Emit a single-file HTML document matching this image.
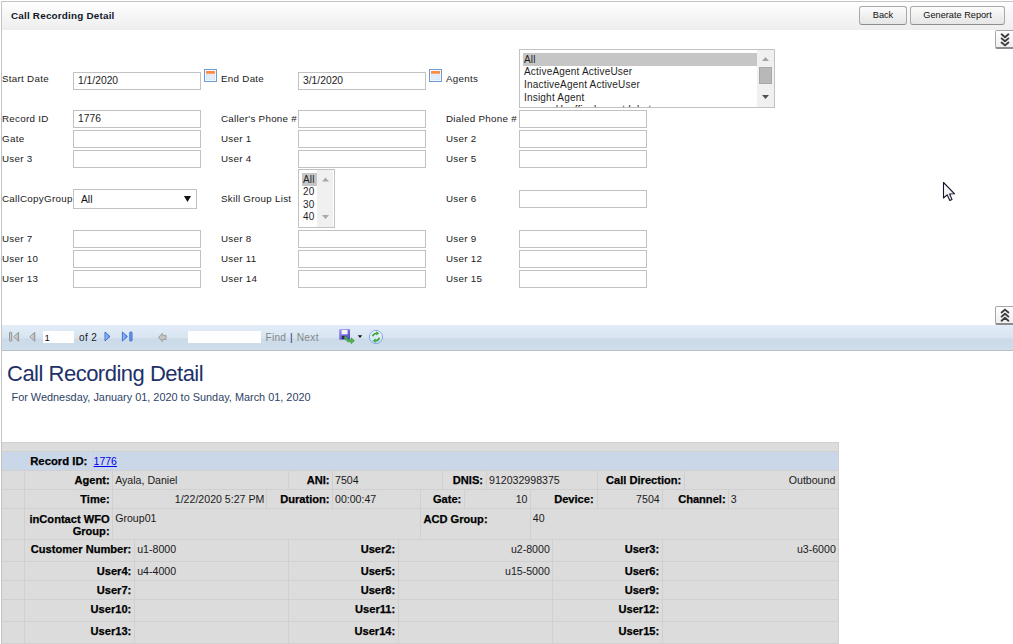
<!DOCTYPE html>
<html><head><meta charset="utf-8"><title>Call Recording Detail</title>
<style>
html,body{margin:0;padding:0;background:#fff;width:1013px;height:644px;overflow:hidden;position:relative;font-family:"Liberation Sans",sans-serif;}
.r{position:absolute;}
.t{position:absolute;white-space:nowrap;}
</style></head><body>
<div class="r" style="left:1px;top:1px;width:1012px;height:643px;border-left:1px solid #c4c4c4;border-top:1px solid #c4c4c4;box-sizing:border-box;"></div>
<div class="r" style="left:2px;top:2px;width:1011px;height:28px;background:linear-gradient(#ffffff,#f7f7f7 40%,#eeeeee);"></div>
<div class="t" style="left:11px;top:10.92px;font-size:9.9px;line-height:9.9px;font-weight:bold;color:#101828;letter-spacing:0.2px;">Call Recording Detail</div>
<div class="r" style="left:859px;top:6px;width:48px;height:19px;box-sizing:border-box;border:1px solid #a9a9a9;border-bottom-color:#8f8f8f;border-radius:3px;background:linear-gradient(#fcfcfc,#f0f0f0 50%,#e6e6e6);"></div>
<div class="t" style="left:683.0px;width:400px;text-align:center;top:10.51px;font-size:9.2px;line-height:9.2px;font-weight:normal;color:#111;">Back</div>
<div class="r" style="left:910px;top:6px;width:95px;height:19px;box-sizing:border-box;border:1px solid #a9a9a9;border-bottom-color:#8f8f8f;border-radius:3px;background:linear-gradient(#fcfcfc,#f0f0f0 50%,#e6e6e6);"></div>
<div class="t" style="left:757.5px;width:400px;text-align:center;top:10.51px;font-size:9.2px;line-height:9.2px;font-weight:normal;color:#111;">Generate Report</div>
<div class="r" style="left:995px;top:30px;width:22px;height:19px;box-sizing:border-box;border:1px solid #a6a6a6;border-bottom:2px solid #8c8c8c;border-radius:2px;background:linear-gradient(#ffffff,#efefef);"></div>
<svg class="r" style="left:1000px;top:30px" width="10" height="19" viewBox="0 0 10 19"><g fill="none" stroke="#3c3c3c" stroke-width="1.9" stroke-linecap="round" stroke-linejoin="round"><polyline points="1.6,4.30 5,7.20 8.4,4.30" /><polyline points="1.6,8.40 5,11.30 8.4,8.40" /><polyline points="1.6,12.50 5,15.40 8.4,12.50" /></g></svg>
<div class="r" style="left:995px;top:306px;width:22px;height:19px;box-sizing:border-box;border:1px solid #a6a6a6;border-bottom:2px solid #8c8c8c;border-radius:2px;background:linear-gradient(#ffffff,#efefef);"></div>
<svg class="r" style="left:1000px;top:306px" width="10" height="19" viewBox="0 0 10 19"><g fill="none" stroke="#3c3c3c" stroke-width="1.9" stroke-linecap="round" stroke-linejoin="round"><polyline points="1.6,6.50 5,3.60 8.4,6.50" /><polyline points="1.6,10.60 5,7.70 8.4,10.60" /><polyline points="1.6,14.70 5,11.80 8.4,14.70" /></g></svg>
<div class="t" style="left:2px;top:73.50px;font-size:9.8px;line-height:9.8px;font-weight:normal;color:#1a1a1a;letter-spacing:0.28px;">Start Date</div>
<div class="r" style="left:73px;top:72px;width:128px;height:18px;box-sizing:border-box;border:1px solid #c2c2c2;background:#fff;"></div>
<div class="t" style="left:78px;top:75.88px;font-size:10.3px;line-height:10.3px;font-weight:normal;color:#1b1b1b;">1/1/2020</div>
<svg class="r" style="left:204px;top:69px" width="13" height="13" viewBox="0 0 13 13"><rect x="0.5" y="0.5" width="12" height="12" fill="#f4f8fd" stroke="#6f9ad6"/><rect x="2" y="2" width="9" height="2.8" rx="0.6" fill="#ff8a3a"/><rect x="2" y="5.2" width="9" height="5.8" fill="#d6e5f8"/><g stroke="#eef4fc" stroke-width="0.6"><line x1="2" y1="7.2" x2="11" y2="7.2"/><line x1="2" y1="9.2" x2="11" y2="9.2"/><line x1="4.3" y1="5.2" x2="4.3" y2="11"/><line x1="6.5" y1="5.2" x2="6.5" y2="11"/><line x1="8.7" y1="5.2" x2="8.7" y2="11"/></g></svg>
<div class="t" style="left:221px;top:73.60px;font-size:9.8px;line-height:9.8px;font-weight:normal;color:#1a1a1a;letter-spacing:0.28px;">End Date</div>
<div class="r" style="left:298px;top:72px;width:128px;height:18px;box-sizing:border-box;border:1px solid #c2c2c2;background:#fff;"></div>
<div class="t" style="left:303px;top:75.88px;font-size:10.3px;line-height:10.3px;font-weight:normal;color:#1b1b1b;">3/1/2020</div>
<svg class="r" style="left:429px;top:69px" width="13" height="13" viewBox="0 0 13 13"><rect x="0.5" y="0.5" width="12" height="12" fill="#f4f8fd" stroke="#6f9ad6"/><rect x="2" y="2" width="9" height="2.8" rx="0.6" fill="#ff8a3a"/><rect x="2" y="5.2" width="9" height="5.8" fill="#d6e5f8"/><g stroke="#eef4fc" stroke-width="0.6"><line x1="2" y1="7.2" x2="11" y2="7.2"/><line x1="2" y1="9.2" x2="11" y2="9.2"/><line x1="4.3" y1="5.2" x2="4.3" y2="11"/><line x1="6.5" y1="5.2" x2="6.5" y2="11"/><line x1="8.7" y1="5.2" x2="8.7" y2="11"/></g></svg>
<div class="t" style="left:446px;top:74.10px;font-size:9.8px;line-height:9.8px;font-weight:normal;color:#1a1a1a;letter-spacing:0.28px;">Agents</div>
<div class="r" style="left:73px;top:110px;width:128px;height:18px;box-sizing:border-box;border:1px solid #c2c2c2;background:#fff;"></div>
<div class="t" style="left:78px;top:113.88px;font-size:10.3px;line-height:10.3px;font-weight:normal;color:#1b1b1b;">1776</div>
<div class="t" style="left:2px;top:113.50px;font-size:9.8px;line-height:9.8px;font-weight:normal;color:#1a1a1a;letter-spacing:0.28px;">Record ID</div>
<div class="r" style="left:298px;top:110px;width:128px;height:18px;box-sizing:border-box;border:1px solid #c2c2c2;background:#fff;"></div>
<div class="t" style="left:221px;top:113.50px;font-size:9.8px;line-height:9.8px;font-weight:normal;color:#1a1a1a;letter-spacing:0.28px;">Caller's Phone #</div>
<div class="r" style="left:519px;top:110px;width:128px;height:18px;box-sizing:border-box;border:1px solid #c2c2c2;background:#fff;"></div>
<div class="t" style="left:446px;top:113.50px;font-size:9.8px;line-height:9.8px;font-weight:normal;color:#1a1a1a;letter-spacing:0.28px;">Dialed Phone #</div>
<div class="r" style="left:73px;top:130px;width:128px;height:18px;box-sizing:border-box;border:1px solid #c2c2c2;background:#fff;"></div>
<div class="t" style="left:2px;top:133.50px;font-size:9.8px;line-height:9.8px;font-weight:normal;color:#1a1a1a;letter-spacing:0.28px;">Gate</div>
<div class="r" style="left:298px;top:130px;width:128px;height:18px;box-sizing:border-box;border:1px solid #c2c2c2;background:#fff;"></div>
<div class="t" style="left:221px;top:133.50px;font-size:9.8px;line-height:9.8px;font-weight:normal;color:#1a1a1a;letter-spacing:0.28px;">User 1</div>
<div class="r" style="left:519px;top:130px;width:128px;height:18px;box-sizing:border-box;border:1px solid #c2c2c2;background:#fff;"></div>
<div class="t" style="left:446px;top:133.50px;font-size:9.8px;line-height:9.8px;font-weight:normal;color:#1a1a1a;letter-spacing:0.28px;">User 2</div>
<div class="r" style="left:73px;top:150px;width:128px;height:18px;box-sizing:border-box;border:1px solid #c2c2c2;background:#fff;"></div>
<div class="t" style="left:2px;top:153.50px;font-size:9.8px;line-height:9.8px;font-weight:normal;color:#1a1a1a;letter-spacing:0.28px;">User 3</div>
<div class="r" style="left:298px;top:150px;width:128px;height:18px;box-sizing:border-box;border:1px solid #c2c2c2;background:#fff;"></div>
<div class="t" style="left:221px;top:153.50px;font-size:9.8px;line-height:9.8px;font-weight:normal;color:#1a1a1a;letter-spacing:0.28px;">User 4</div>
<div class="r" style="left:519px;top:150px;width:128px;height:18px;box-sizing:border-box;border:1px solid #c2c2c2;background:#fff;"></div>
<div class="t" style="left:446px;top:153.50px;font-size:9.8px;line-height:9.8px;font-weight:normal;color:#1a1a1a;letter-spacing:0.28px;">User 5</div>
<div class="r" style="left:73px;top:230px;width:128px;height:18px;box-sizing:border-box;border:1px solid #c2c2c2;background:#fff;"></div>
<div class="t" style="left:2px;top:233.50px;font-size:9.8px;line-height:9.8px;font-weight:normal;color:#1a1a1a;letter-spacing:0.28px;">User 7</div>
<div class="r" style="left:298px;top:230px;width:128px;height:18px;box-sizing:border-box;border:1px solid #c2c2c2;background:#fff;"></div>
<div class="t" style="left:221px;top:233.50px;font-size:9.8px;line-height:9.8px;font-weight:normal;color:#1a1a1a;letter-spacing:0.28px;">User 8</div>
<div class="r" style="left:519px;top:230px;width:128px;height:18px;box-sizing:border-box;border:1px solid #c2c2c2;background:#fff;"></div>
<div class="t" style="left:446px;top:233.50px;font-size:9.8px;line-height:9.8px;font-weight:normal;color:#1a1a1a;letter-spacing:0.28px;">User 9</div>
<div class="r" style="left:73px;top:250px;width:128px;height:18px;box-sizing:border-box;border:1px solid #c2c2c2;background:#fff;"></div>
<div class="t" style="left:2px;top:253.50px;font-size:9.8px;line-height:9.8px;font-weight:normal;color:#1a1a1a;letter-spacing:0.28px;">User 10</div>
<div class="r" style="left:298px;top:250px;width:128px;height:18px;box-sizing:border-box;border:1px solid #c2c2c2;background:#fff;"></div>
<div class="t" style="left:221px;top:253.50px;font-size:9.8px;line-height:9.8px;font-weight:normal;color:#1a1a1a;letter-spacing:0.28px;">User 11</div>
<div class="r" style="left:519px;top:250px;width:128px;height:18px;box-sizing:border-box;border:1px solid #c2c2c2;background:#fff;"></div>
<div class="t" style="left:446px;top:253.50px;font-size:9.8px;line-height:9.8px;font-weight:normal;color:#1a1a1a;letter-spacing:0.28px;">User 12</div>
<div class="r" style="left:73px;top:270px;width:128px;height:18px;box-sizing:border-box;border:1px solid #c2c2c2;background:#fff;"></div>
<div class="t" style="left:2px;top:273.50px;font-size:9.8px;line-height:9.8px;font-weight:normal;color:#1a1a1a;letter-spacing:0.28px;">User 13</div>
<div class="r" style="left:298px;top:270px;width:128px;height:18px;box-sizing:border-box;border:1px solid #c2c2c2;background:#fff;"></div>
<div class="t" style="left:221px;top:273.50px;font-size:9.8px;line-height:9.8px;font-weight:normal;color:#1a1a1a;letter-spacing:0.28px;">User 14</div>
<div class="r" style="left:519px;top:270px;width:128px;height:18px;box-sizing:border-box;border:1px solid #c2c2c2;background:#fff;"></div>
<div class="t" style="left:446px;top:273.50px;font-size:9.8px;line-height:9.8px;font-weight:normal;color:#1a1a1a;letter-spacing:0.28px;">User 15</div>
<div class="t" style="left:2px;top:194.00px;font-size:9.8px;line-height:9.8px;font-weight:normal;color:#1a1a1a;letter-spacing:0.28px;">CallCopyGroup</div>
<div class="r" style="left:73px;top:189px;width:124px;height:20px;box-sizing:border-box;border:1px solid #c2c2c2;background:#fff;"></div>
<div class="t" style="left:81px;top:194.58px;font-size:10.3px;line-height:10.3px;font-weight:normal;color:#111;">All</div>
<svg class="r" style="left:184px;top:196px" width="7" height="6" viewBox="0 0 7 6"><polygon points="0,0 7,0 3.5,6" fill="#111"/></svg>
<div class="t" style="left:221px;top:194.00px;font-size:9.8px;line-height:9.8px;font-weight:normal;color:#1a1a1a;letter-spacing:0.28px;">Skill Group List</div>
<div class="r" style="left:519px;top:190px;width:128px;height:18px;box-sizing:border-box;border:1px solid #c2c2c2;background:#fff;"></div>
<div class="t" style="left:446px;top:193.70px;font-size:9.8px;line-height:9.8px;font-weight:normal;color:#1a1a1a;letter-spacing:0.28px;">User 6</div>
<div class="r" style="left:298px;top:169px;width:37px;height:59px;box-sizing:border-box;border:1px solid #c2c2c2;background:#fff;"></div>
<div class="r" style="left:317px;top:170px;width:16px;height:57px;background:#f0f0f0;"></div>
<div class="r" style="left:302px;top:173px;width:15px;height:12.5px;background:#c6c6c6;"></div>
<div class="t" style="left:303px;top:174.54px;font-size:10px;line-height:10px;font-weight:normal;color:#1e1e1e;letter-spacing:0.2px;">All</div>
<div class="t" style="left:303px;top:187.04px;font-size:10px;line-height:10px;font-weight:normal;color:#1e1e1e;letter-spacing:0.2px;">20</div>
<div class="t" style="left:303px;top:199.54px;font-size:10px;line-height:10px;font-weight:normal;color:#1e1e1e;letter-spacing:0.2px;">30</div>
<div class="t" style="left:303px;top:212.04px;font-size:10px;line-height:10px;font-weight:normal;color:#1e1e1e;letter-spacing:0.2px;">40</div>
<svg class="r" style="left:321px;top:176px" width="9" height="44" viewBox="0 0 9 44"><polygon points="1,5.5 4.5,1.5 8,5.5" fill="#a8a8a8"/><polygon points="1,39 8,39 4.5,43" fill="#a8a8a8"/></svg>
<div class="r" style="left:519px;top:49px;width:256px;height:59px;box-sizing:border-box;border:1px solid #c2c2c2;background:#fff;overflow:hidden;"></div>
<div class="r" style="left:757px;top:50px;width:17px;height:57px;background:#f0f0f0;"></div>
<div class="r" style="left:759px;top:67px;width:13px;height:17px;background:#b8b8b8;box-sizing:border-box;border:1px solid #a8a8a8;"></div>
<div class="r" style="left:523px;top:53px;width:234px;height:12.5px;background:#c6c6c6;"></div>
<svg class="r" style="left:761px;top:55px" width="9" height="46" viewBox="0 0 9 46"><polygon points="1,6 4.5,2 8,6" fill="#a3a3a3"/><polygon points="1,40 8,40 4.5,44" fill="#505050"/></svg>
<div class="r" style="left:520px;top:50px;width:237px;height:57px;overflow:hidden;">
<div class="t" style="left:4px;top:4.83px;font-size:10px;line-height:10px;letter-spacing:0.2px;color:#1e1e1e">All</div>
<div class="t" style="left:4px;top:17.43px;font-size:10px;line-height:10px;letter-spacing:0.2px;color:#1e1e1e">ActiveAgent ActiveUser</div>
<div class="t" style="left:4px;top:30.04px;font-size:10px;line-height:10px;letter-spacing:0.2px;color:#1e1e1e">InactiveAgent ActiveUser</div>
<div class="t" style="left:4px;top:42.63px;font-size:10px;line-height:10px;letter-spacing:0.2px;color:#1e1e1e">Insight Agent</div>
<div class="t" style="left:4px;top:55.23px;font-size:10px;line-height:10px;letter-spacing:0.2px;color:#1e1e1e">aaaaa Unoffical agent Inbat</div>
</div>
<div class="r" style="left:2px;top:325px;width:1011px;height:25px;background:linear-gradient(#e2edf8 0%,#d8e5f1 50%,#cbdae8 57%,#cfdeeb 100%);"></div>
<div class="r" style="left:2px;top:350px;width:1011px;height:1px;background:#b9bfc6;"></div>
<svg class="r" style="left:0px;top:325px" width="400" height="25" viewBox="0 0 400 25"><defs><linearGradient id="gg" x1="0" x2="1" y1="0" y2="0"><stop offset="0" stop-color="#e4e4e4"/><stop offset="1" stop-color="#b4b4b4"/></linearGradient><linearGradient id="bg" x1="0" x2="1" y1="0" y2="0"><stop offset="0" stop-color="#a9c6f5"/><stop offset="1" stop-color="#4f82e0"/></linearGradient><linearGradient id="fl" x1="0" x2="1" y1="0" y2="1"><stop offset="0" stop-color="#9d96f0"/><stop offset="1" stop-color="#4a44c0"/></linearGradient><linearGradient id="rf" x1="0" x2="0" y1="0" y2="1"><stop offset="0" stop-color="#f6f9fe"/><stop offset="1" stop-color="#c7dbf6"/></linearGradient></defs><rect x="9.5" y="7.3" width="2.2" height="8.9" rx="0.6" fill="#c9c9c9" stroke="#8e8e8e" stroke-width="0.9"/><polygon points="18.6,7.3 18.6,16.2 13.6,11.75" fill="url(#gg)" stroke="#8e8e8e" stroke-width="0.9" stroke-linejoin="round"/><polygon points="34.8,7.3 34.8,16.2 29.8,11.75" fill="url(#gg)" stroke="#8e8e8e" stroke-width="0.9" stroke-linejoin="round"/><polygon points="105,7 105,16 110,11.5" fill="url(#bg)" stroke="#2f62d2" stroke-width="0.9" stroke-linejoin="round"/><polygon points="122.4,7 122.4,16 127.4,11.5" fill="url(#bg)" stroke="#2f62d2" stroke-width="0.9" stroke-linejoin="round"/><rect x="129.8" y="7" width="2.2" height="9" rx="0.6" fill="#7aa2ec" stroke="#2f62d2" stroke-width="0.9"/><polygon points="158.5,12.4 162.3,8.3 162.3,10.3 166,10.3 166,14.5 162.3,14.5 162.3,16.6" fill="#c4c4c4" stroke="#9a9a9a" stroke-width="0.9" stroke-linejoin="round"/><rect x="339.2" y="4.2" width="10.8" height="10.6" rx="0.8" fill="url(#fl)"/><rect x="341.6" y="5" width="6" height="4.3" fill="#f4f4fb"/><rect x="341.8" y="10.8" width="3" height="3.2" fill="#28285a"/><path d="M345,11 L348.5,14.8 L351.2,14.8 L351.2,12.8 L354.4,15.8 L351.2,18.6 L351.2,16.8 L347.6,16.8 L344,13 Z" fill="#4cb84c" stroke="#2f8f2f" stroke-width="0.6" stroke-linejoin="round"/><polygon points="357.8,10.2 362.2,10.2 360,13.1" fill="#111"/><circle cx="376" cy="12" r="6.6" fill="url(#rf)" stroke="#86a9e2" stroke-width="1"/><path d="M372.6,11.3 Q373.4,8.3 376.6,8.3" fill="none" stroke="#3aaa3a" stroke-width="1.7"/><polygon points="376.2,6.3 379.4,8.3 376.2,10.4" fill="#3aaa3a"/><path d="M379.4,12.7 Q378.6,15.7 375.4,15.7" fill="none" stroke="#3aaa3a" stroke-width="1.7"/><polygon points="375.8,13.6 372.6,15.7 375.8,17.7" fill="#3aaa3a"/></svg>
<div class="r" style="left:43px;top:331px;width:31px;height:12px;background:#fff;"></div>
<div class="t" style="left:44.5px;top:333.37px;font-size:9.6px;line-height:9.6px;font-weight:normal;color:#111;">1</div>
<div class="t" style="left:79px;top:333.04px;font-size:10px;line-height:10px;font-weight:normal;color:#1e1e1e;letter-spacing:0.4px;">of 2</div>
<div class="r" style="left:188px;top:331px;width:73px;height:12px;background:#fff;"></div>
<div class="t" style="left:265.5px;top:333.07px;font-size:10.2px;line-height:10.2px;font-weight:normal;color:#878787;letter-spacing:0.2px;">Find</div>
<div class="t" style="left:290px;top:333.07px;font-size:10.2px;line-height:10.2px;font-weight:normal;color:#26357a;">|</div>
<div class="t" style="left:296.7px;top:333.07px;font-size:10.2px;line-height:10.2px;font-weight:normal;color:#878787;letter-spacing:0.3px;">Next</div>
<div class="t" style="left:7px;top:362.68px;font-size:22px;line-height:22px;font-weight:normal;color:#1d3168;letter-spacing:-0.5px;">Call Recording Detail</div>
<div class="t" style="left:11.5px;top:392.47px;font-size:10.9px;line-height:10.9px;font-weight:normal;color:#2e3f66;">For Wednesday, January 01, 2020 to Sunday, March 01, 2020</div>
<div class="r" style="left:2px;top:442px;width:836px;height:202px;background:#dcdcdc;"></div>
<div class="r" style="left:838px;top:442px;width:1px;height:202px;background:#d0d0d0;"></div>
<div class="r" style="left:2px;top:451px;width:836px;height:1px;background:#d0d0d0;"></div>
<div class="r" style="left:2px;top:442px;width:836px;height:1px;background:#cfcfcf;"></div>
<div class="r" style="left:2px;top:452px;width:836px;height:18px;background:#cad7e8;"></div>
<div class="r" style="left:90px;top:452px;width:1px;height:18px;background:#d3ddea;"></div>
<div class="t" style="left:-312.7px;width:400px;text-align:right;top:455.63px;font-size:11.3px;line-height:11.3px;font-weight:bold;color:#000;-webkit-text-stroke:0.25px #000;">Record ID:</div>
<div class="t" style="left:93.6px;top:455.81px;font-size:10.5px;line-height:10.5px;font-weight:normal;color:#0000ee;"><span style="text-decoration:underline">1776</span></div>
<div class="r" style="left:2px;top:470px;width:836px;height:1px;background:#d0d0d0;"></div>
<div class="r" style="left:2px;top:489px;width:836px;height:1px;background:#d0d0d0;"></div>
<div class="r" style="left:2px;top:508px;width:836px;height:1px;background:#d0d0d0;"></div>
<div class="r" style="left:2px;top:539px;width:836px;height:1px;background:#d0d0d0;"></div>
<div class="r" style="left:2px;top:561px;width:836px;height:1px;background:#d0d0d0;"></div>
<div class="r" style="left:2px;top:580px;width:836px;height:1px;background:#d0d0d0;"></div>
<div class="r" style="left:2px;top:599px;width:836px;height:1px;background:#d0d0d0;"></div>
<div class="r" style="left:2px;top:621px;width:836px;height:1px;background:#d0d0d0;"></div>
<div class="r" style="left:2px;top:643px;width:836px;height:1px;background:#d0d0d0;"></div>
<div class="r" style="left:24px;top:470px;width:1px;height:174px;background:#d0d0d0;"></div>
<div class="r" style="left:112px;top:470px;width:1px;height:19px;background:#d0d0d0;"></div>
<div class="r" style="left:288px;top:470px;width:1px;height:19px;background:#d0d0d0;"></div>
<div class="r" style="left:332px;top:470px;width:1px;height:19px;background:#d0d0d0;"></div>
<div class="r" style="left:442px;top:470px;width:1px;height:19px;background:#d0d0d0;"></div>
<div class="r" style="left:486px;top:470px;width:1px;height:19px;background:#d0d0d0;"></div>
<div class="r" style="left:597px;top:470px;width:1px;height:19px;background:#d0d0d0;"></div>
<div class="r" style="left:684px;top:470px;width:1px;height:19px;background:#d0d0d0;"></div>
<div class="r" style="left:112px;top:489px;width:1px;height:19px;background:#d0d0d0;"></div>
<div class="r" style="left:266px;top:489px;width:1px;height:19px;background:#d0d0d0;"></div>
<div class="r" style="left:332px;top:489px;width:1px;height:19px;background:#d0d0d0;"></div>
<div class="r" style="left:420px;top:489px;width:1px;height:19px;background:#d0d0d0;"></div>
<div class="r" style="left:464px;top:489px;width:1px;height:19px;background:#d0d0d0;"></div>
<div class="r" style="left:530px;top:489px;width:1px;height:19px;background:#d0d0d0;"></div>
<div class="r" style="left:597px;top:489px;width:1px;height:19px;background:#d0d0d0;"></div>
<div class="r" style="left:662px;top:489px;width:1px;height:19px;background:#d0d0d0;"></div>
<div class="r" style="left:728px;top:489px;width:1px;height:19px;background:#d0d0d0;"></div>
<div class="r" style="left:112px;top:508px;width:1px;height:31px;background:#d0d0d0;"></div>
<div class="r" style="left:420px;top:508px;width:1px;height:31px;background:#d0d0d0;"></div>
<div class="r" style="left:530px;top:508px;width:1px;height:31px;background:#d0d0d0;"></div>
<div class="r" style="left:134px;top:539px;width:1px;height:22px;background:#d0d0d0;"></div>
<div class="r" style="left:288px;top:539px;width:1px;height:22px;background:#d0d0d0;"></div>
<div class="r" style="left:398px;top:539px;width:1px;height:22px;background:#d0d0d0;"></div>
<div class="r" style="left:552px;top:539px;width:1px;height:22px;background:#d0d0d0;"></div>
<div class="r" style="left:662px;top:539px;width:1px;height:22px;background:#d0d0d0;"></div>
<div class="r" style="left:134px;top:561px;width:1px;height:19px;background:#d0d0d0;"></div>
<div class="r" style="left:288px;top:561px;width:1px;height:19px;background:#d0d0d0;"></div>
<div class="r" style="left:398px;top:561px;width:1px;height:19px;background:#d0d0d0;"></div>
<div class="r" style="left:552px;top:561px;width:1px;height:19px;background:#d0d0d0;"></div>
<div class="r" style="left:662px;top:561px;width:1px;height:19px;background:#d0d0d0;"></div>
<div class="r" style="left:134px;top:580px;width:1px;height:19px;background:#d0d0d0;"></div>
<div class="r" style="left:288px;top:580px;width:1px;height:19px;background:#d0d0d0;"></div>
<div class="r" style="left:398px;top:580px;width:1px;height:19px;background:#d0d0d0;"></div>
<div class="r" style="left:552px;top:580px;width:1px;height:19px;background:#d0d0d0;"></div>
<div class="r" style="left:662px;top:580px;width:1px;height:19px;background:#d0d0d0;"></div>
<div class="r" style="left:134px;top:599px;width:1px;height:22px;background:#d0d0d0;"></div>
<div class="r" style="left:288px;top:599px;width:1px;height:22px;background:#d0d0d0;"></div>
<div class="r" style="left:398px;top:599px;width:1px;height:22px;background:#d0d0d0;"></div>
<div class="r" style="left:552px;top:599px;width:1px;height:22px;background:#d0d0d0;"></div>
<div class="r" style="left:662px;top:599px;width:1px;height:22px;background:#d0d0d0;"></div>
<div class="r" style="left:134px;top:621px;width:1px;height:23px;background:#d0d0d0;"></div>
<div class="r" style="left:288px;top:621px;width:1px;height:23px;background:#d0d0d0;"></div>
<div class="r" style="left:398px;top:621px;width:1px;height:23px;background:#d0d0d0;"></div>
<div class="r" style="left:552px;top:621px;width:1px;height:23px;background:#d0d0d0;"></div>
<div class="r" style="left:662px;top:621px;width:1px;height:23px;background:#d0d0d0;"></div>
<div class="t" style="left:-290.4px;width:400px;text-align:right;top:474.60px;font-size:11.1px;line-height:11.1px;font-weight:bold;color:#000;-webkit-text-stroke:0.25px #000;">Agent:</div>
<div class="t" style="left:115.2px;top:475.03px;font-size:10.6px;line-height:10.6px;font-weight:normal;color:#1a1a1a;">Ayala, Daniel</div>
<div class="t" style="left:-70.5px;width:400px;text-align:right;top:474.60px;font-size:11.1px;line-height:11.1px;font-weight:bold;color:#000;-webkit-text-stroke:0.25px #000;">ANI:</div>
<div class="t" style="left:335px;top:475.03px;font-size:10.6px;line-height:10.6px;font-weight:normal;color:#1a1a1a;">7504</div>
<div class="t" style="left:83px;width:400px;text-align:right;top:474.60px;font-size:11.1px;line-height:11.1px;font-weight:bold;color:#000;-webkit-text-stroke:0.25px #000;">DNIS:</div>
<div class="t" style="left:489px;top:475.03px;font-size:10.6px;line-height:10.6px;font-weight:normal;color:#1a1a1a;">912032998375</div>
<div class="t" style="left:281.29999999999995px;width:400px;text-align:right;top:474.60px;font-size:11.1px;line-height:11.1px;font-weight:bold;color:#000;-webkit-text-stroke:0.25px #000;">Call Direction:</div>
<div class="t" style="left:435.29999999999995px;width:400px;text-align:right;top:475.03px;font-size:10.6px;line-height:10.6px;font-weight:normal;color:#1a1a1a;">Outbound</div>
<div class="t" style="left:-290.4px;width:400px;text-align:right;top:494.40px;font-size:11.1px;line-height:11.1px;font-weight:bold;color:#000;-webkit-text-stroke:0.25px #000;">Time:</div>
<div class="t" style="left:-135.7px;width:400px;text-align:right;top:493.83px;font-size:10.6px;line-height:10.6px;font-weight:normal;color:#1a1a1a;">1/22/2020 5:27 PM</div>
<div class="t" style="left:-70.5px;width:400px;text-align:right;top:494.40px;font-size:11.1px;line-height:11.1px;font-weight:bold;color:#000;-webkit-text-stroke:0.25px #000;">Duration:</div>
<div class="t" style="left:335px;top:493.83px;font-size:10.6px;line-height:10.6px;font-weight:normal;color:#1a1a1a;">00:00:47</div>
<div class="t" style="left:61.30000000000001px;width:400px;text-align:right;top:494.40px;font-size:11.1px;line-height:11.1px;font-weight:bold;color:#000;-webkit-text-stroke:0.25px #000;">Gate:</div>
<div class="t" style="left:127.5px;width:400px;text-align:right;top:493.83px;font-size:10.6px;line-height:10.6px;font-weight:normal;color:#1a1a1a;">10</div>
<div class="t" style="left:193.60000000000002px;width:400px;text-align:right;top:494.40px;font-size:11.1px;line-height:11.1px;font-weight:bold;color:#000;-webkit-text-stroke:0.25px #000;">Device:</div>
<div class="t" style="left:259.70000000000005px;width:400px;text-align:right;top:493.83px;font-size:10.6px;line-height:10.6px;font-weight:normal;color:#1a1a1a;">7504</div>
<div class="t" style="left:325.6px;width:400px;text-align:right;top:494.40px;font-size:11.1px;line-height:11.1px;font-weight:bold;color:#000;-webkit-text-stroke:0.25px #000;">Channel:</div>
<div class="t" style="left:730.8px;top:493.83px;font-size:10.6px;line-height:10.6px;font-weight:normal;color:#1a1a1a;">3</div>
<div class="t" style="left:-290.4px;width:400px;text-align:right;top:513.60px;font-size:11.1px;line-height:11.1px;font-weight:bold;color:#000;-webkit-text-stroke:0.25px #000;">inContact WFO</div>
<div class="t" style="left:-290.4px;width:400px;text-align:right;top:526.20px;font-size:11.1px;line-height:11.1px;font-weight:bold;color:#000;-webkit-text-stroke:0.25px #000;">Group:</div>
<div class="t" style="left:115.2px;top:513.03px;font-size:10.6px;line-height:10.6px;font-weight:normal;color:#1a1a1a;">Group01</div>
<div class="t" style="left:423.5px;top:513.60px;font-size:11.1px;line-height:11.1px;font-weight:bold;color:#000;-webkit-text-stroke:0.25px #000;">ACD Group:</div>
<div class="t" style="left:532.8px;top:513.03px;font-size:10.6px;line-height:10.6px;font-weight:normal;color:#1a1a1a;">40</div>
<div class="t" style="left:-268.7px;width:400px;text-align:right;top:543.80px;font-size:11.1px;line-height:11.1px;font-weight:bold;color:#000;-webkit-text-stroke:0.25px #000;">Customer Number:</div>
<div class="t" style="left:-4.800000000000011px;width:400px;text-align:right;top:543.80px;font-size:11.1px;line-height:11.1px;font-weight:bold;color:#000;-webkit-text-stroke:0.25px #000;">User2:</div>
<div class="t" style="left:259.20000000000005px;width:400px;text-align:right;top:543.80px;font-size:11.1px;line-height:11.1px;font-weight:bold;color:#000;-webkit-text-stroke:0.25px #000;">User3:</div>
<div class="t" style="left:137.2px;top:544.23px;font-size:10.6px;line-height:10.6px;font-weight:normal;color:#1a1a1a;">u1-8000</div>
<div class="t" style="left:149.79999999999995px;width:400px;text-align:right;top:544.23px;font-size:10.6px;line-height:10.6px;font-weight:normal;color:#1a1a1a;">u2-8000</div>
<div class="t" style="left:435.79999999999995px;width:400px;text-align:right;top:544.23px;font-size:10.6px;line-height:10.6px;font-weight:normal;color:#1a1a1a;">u3-6000</div>
<div class="t" style="left:-268.7px;width:400px;text-align:right;top:565.60px;font-size:11.1px;line-height:11.1px;font-weight:bold;color:#000;-webkit-text-stroke:0.25px #000;">User4:</div>
<div class="t" style="left:-4.800000000000011px;width:400px;text-align:right;top:565.60px;font-size:11.1px;line-height:11.1px;font-weight:bold;color:#000;-webkit-text-stroke:0.25px #000;">User5:</div>
<div class="t" style="left:259.20000000000005px;width:400px;text-align:right;top:565.60px;font-size:11.1px;line-height:11.1px;font-weight:bold;color:#000;-webkit-text-stroke:0.25px #000;">User6:</div>
<div class="t" style="left:137.2px;top:566.03px;font-size:10.6px;line-height:10.6px;font-weight:normal;color:#1a1a1a;">u4-4000</div>
<div class="t" style="left:149.79999999999995px;width:400px;text-align:right;top:566.03px;font-size:10.6px;line-height:10.6px;font-weight:normal;color:#1a1a1a;">u15-5000</div>
<div class="t" style="left:-268.7px;width:400px;text-align:right;top:584.80px;font-size:11.1px;line-height:11.1px;font-weight:bold;color:#000;-webkit-text-stroke:0.25px #000;">User7:</div>
<div class="t" style="left:-4.800000000000011px;width:400px;text-align:right;top:584.80px;font-size:11.1px;line-height:11.1px;font-weight:bold;color:#000;-webkit-text-stroke:0.25px #000;">User8:</div>
<div class="t" style="left:259.20000000000005px;width:400px;text-align:right;top:584.80px;font-size:11.1px;line-height:11.1px;font-weight:bold;color:#000;-webkit-text-stroke:0.25px #000;">User9:</div>
<div class="t" style="left:-268.7px;width:400px;text-align:right;top:604.00px;font-size:11.1px;line-height:11.1px;font-weight:bold;color:#000;-webkit-text-stroke:0.25px #000;">User10:</div>
<div class="t" style="left:-4.800000000000011px;width:400px;text-align:right;top:604.00px;font-size:11.1px;line-height:11.1px;font-weight:bold;color:#000;-webkit-text-stroke:0.25px #000;">User11:</div>
<div class="t" style="left:259.20000000000005px;width:400px;text-align:right;top:604.00px;font-size:11.1px;line-height:11.1px;font-weight:bold;color:#000;-webkit-text-stroke:0.25px #000;">User12:</div>
<div class="t" style="left:-268.7px;width:400px;text-align:right;top:625.70px;font-size:11.1px;line-height:11.1px;font-weight:bold;color:#000;-webkit-text-stroke:0.25px #000;">User13:</div>
<div class="t" style="left:-4.800000000000011px;width:400px;text-align:right;top:625.70px;font-size:11.1px;line-height:11.1px;font-weight:bold;color:#000;-webkit-text-stroke:0.25px #000;">User14:</div>
<div class="t" style="left:259.20000000000005px;width:400px;text-align:right;top:625.70px;font-size:11.1px;line-height:11.1px;font-weight:bold;color:#000;-webkit-text-stroke:0.25px #000;">User15:</div>
<svg class="r" style="left:942px;top:181px" width="14" height="22" viewBox="0 0 14 22"><defs><linearGradient id="cg" x1="0" x2="1" y1="0" y2="1"><stop offset="0" stop-color="#fff"/><stop offset="1" stop-color="#e4e4e4"/></linearGradient></defs><path d="M1.5,1.5 L1.5,17 L5.1,13.8 L7.8,19.4 L10,18.4 L7.6,13 L12.6,12.8 Z" fill="url(#cg)" stroke="#141428" stroke-width="1.1" stroke-linejoin="round"/></svg>
</body></html>
